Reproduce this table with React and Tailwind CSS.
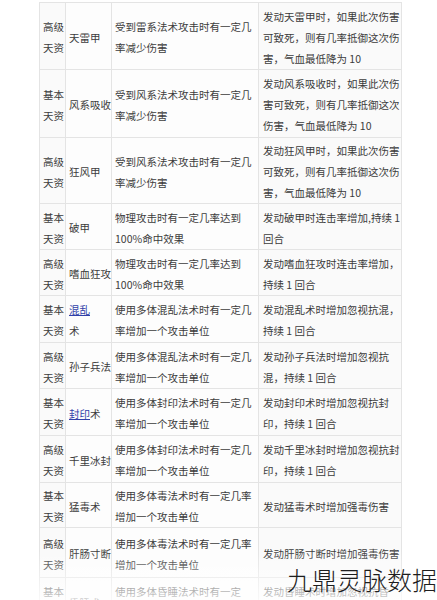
const rows = [
  { tier: "高级", name: ["天雷甲"], desc: ["受到雷系法术攻击时有一定几", "率减少伤害"], effect: ["发动天雷甲时，如果此次伤害", "可致死，则有几率抵御这次伤", "害，气血最低降为 10"], h: "h-[67px]" },
  { tier: "基本", name: ["风系吸收"], desc: ["受到风系法术攻击时有一定几", "率减少伤害"], effect: ["发动风系吸收时，如果此次伤", "害可致死，则有几率抵御这次", "伤害，气血最低降为 10"], h: "h-[68px]" },
  { tier: "高级", name: ["狂风甲"], desc: ["受到风系法术攻击时有一定几", "率减少伤害"], effect: ["发动狂风甲时，如果此次伤害", "可致死，则有几率抵御这次伤", "害，气血最低降为 10"], h: "h-[66px]" },
  { tier: "基本", name: ["破甲"], desc: ["物理攻击时有一定几率达到", "100%命中效果"], effect: ["发动破甲时连击率增加,持续 1", "回合"], h: "h-[46px]" },
  { tier: "高级", name: ["嗜血狂攻"], desc: ["物理攻击时有一定几率达到", "100%命中效果"], effect: ["发动嗜血狂攻时连击率增加，", "持续 1 回合"], h: "h-[46px]" },
  { tier: "基本", name: ["混乱", "术"], link: "混乱", desc: ["使用多体混乱法术时有一定几", "率增加一个攻击单位"], effect: ["发动混乱术时增加忽视抗混，", "持续 1 回合"], h: "h-[47px]" },
  { tier: "高级", name: ["孙子兵法"], desc: ["使用多体混乱法术时有一定几", "率增加一个攻击单位"], effect: ["发动孙子兵法时增加忽视抗", "混，持续 1 回合"], h: "h-[46px]" },
  { tier: "基本", name: ["封印术"], link: "封印", desc: ["使用多体封印法术时有一定几", "率增加一个攻击单位"], effect: ["发动封印术时增加忽视抗封", "印，持续 1 回合"], h: "h-[47px]" },
  { tier: "高级", name: ["千里冰封"], desc: ["使用多体封印法术时有一定几", "率增加一个攻击单位"], effect: ["发动千里冰封时增加忽视抗封", "印，持续 1 回合"], h: "h-[47px]" },
  { tier: "基本", name: ["猛毒术"], desc: ["使用多体毒法术时有一定几率", "增加一个攻击单位"], effect: ["发动猛毒术时增加强毒伤害"], h: "h-[45px]" },
  { tier: "高级", name: ["肝肠寸断"], desc: ["使用多体毒法术时有一定几率", "增加一个攻击单位"], effect: ["发动肝肠寸断时增加强毒伤害"], h: "h-[50px]" },
  { tier: "基本", name: ["昏睡术"], desc: ["使用多体昏睡法术时有一定", "几率增加一个攻击单位"], effect: ["发动昏睡术时增加忽视抗昏", "睡，持续 1 回合"], h: "h-[47px]" },
];

const Lines = ({ lines }) => (
  <div>
    {lines.map((l, i) => (
      <div key={i} className="whitespace-nowrap">{l}</div>
    ))}
  </div>
);

const NameCell = ({ row }) => {
  if (!row.link) return <Lines lines={row.name} />;
  const first = row.name[0];
  if (first.startsWith(row.link) && first !== row.link) {
    return (
      <div className="whitespace-nowrap">
        <span className="text-[#3040a8] underline">{row.link}</span>
        {first.slice(row.link.length)}
      </div>
    );
  }
  return (
    <div>
      <div className="whitespace-nowrap"><span className="text-[#3040a8] underline">{first}</span></div>
      {row.name.slice(1).map((l, i) => (
        <div key={i} className="whitespace-nowrap">{l}</div>
      ))}
    </div>
  );
};

export default function App() {
  return (
    <div className="relative w-[437px] h-[600px] overflow-hidden bg-white text-[#3c3c3c]" style={{ fontFamily: '"Noto Sans CJK SC", "Noto Sans", sans-serif' }}>
      <div className="pt-[2px] pl-[39px]">
        <table className="table-fixed border-collapse w-[362px] text-[10.5px] leading-[21px] bg-[#fdfdfd]">
          <colgroup>
            <col className="w-[26px]" />
            <col className="w-[46px]" />
            <col className="w-[147px]" />
            <col className="w-[143px]" />
          </colgroup>
          <tbody>
            {rows.map((row, i) => (
              <tr key={i} className={row.h}>
                <td className="border border-[#e4e4e4] align-middle pt-[2px] pb-0 pl-[3px] pr-0 bg-[#fafafa]">
                  <Lines lines={[row.tier, "天资"]} />
                </td>
                <td className="border border-[#e4e4e4] align-middle pt-[2px] pb-0 pl-[3px] pr-0">
                  <NameCell row={row} />
                </td>
                <td className="border border-[#e4e4e4] align-middle pt-[2px] pb-0 pl-[3px] pr-0">
                  <Lines lines={row.desc} />
                </td>
                <td className="border border-[#e4e4e4] align-middle pt-[2px] pb-0 pl-[4px] pr-0 bg-[#fafafa]">
                  <Lines lines={row.effect} />
                </td>
              </tr>
            ))}
          </tbody>
        </table>
      </div>
      <div className="absolute left-0 right-0 bottom-0 h-[50px] bg-gradient-to-b from-white/0 to-white/75" />
      <div className="absolute right-0 bottom-[8px] text-[25px] leading-none font-light text-[#1e1e1e] whitespace-nowrap">
        九鼎灵脉数据
      </div>
    </div>
  );
}
